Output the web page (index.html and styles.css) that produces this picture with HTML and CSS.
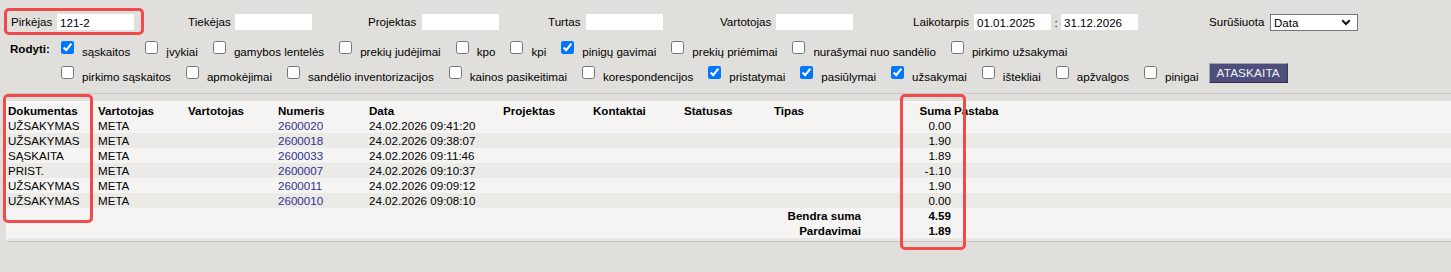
FILE: index.html
```html
<!DOCTYPE html>
<html lang="lt">
<head>
<meta charset="utf-8">
<title>Ataskaita</title>
<link rel="stylesheet" href="styles.css">
</head>
<body>
<div class="page">
  <form class="filters">
    <label class="lbl">Pirkėjas</label><span class="cell"><input class="txt" value="121-2"></span>
    <label class="lbl">Tiekėjas</label><span class="cell"><input class="txt"></span>
    <label class="lbl">Projektas</label><span class="cell"><input class="txt"></span>
    <label class="lbl">Turtas</label><span class="cell"><input class="txt"></span>
    <label class="lbl">Vartotojas</label><span class="cell"><input class="txt"></span>
    <label class="lbl">Laikotarpis</label><span class="cell period"><input class="txt" value="01.01.2025"><span class="colon">:</span><input class="txt" value="31.12.2026"></span>
    <label class="lbl">Surūšiuota</label><span class="cell"><span class="sel"><select><option>Data</option></select><svg class="chev" width="10" height="7" viewBox="0 0 10 7"><path d="M1.2 1.3 L5 5 L8.8 1.3" fill="none" stroke="#111" stroke-width="2"/></svg></span></span>
  </form>

  <div class="opts">
    <b class="rodyti">Rodyti:</b>
    <div class="optrow">
      <label class="opt"><input type="checkbox" checked><span>sąskaitos</span></label>
      <label class="opt"><input type="checkbox"><span>įvykiai</span></label>
      <label class="opt"><input type="checkbox"><span>gamybos lentelės</span></label>
      <label class="opt"><input type="checkbox"><span>prekių judėjimai</span></label>
      <label class="opt"><input type="checkbox"><span>kpo</span></label>
      <label class="opt"><input type="checkbox"><span>kpi</span></label>
      <label class="opt"><input type="checkbox" checked><span>pinigų gavimai</span></label>
      <label class="opt"><input type="checkbox"><span>prekių priėmimai</span></label>
      <label class="opt"><input type="checkbox"><span>nurašymai nuo sandėlio</span></label>
      <label class="opt"><input type="checkbox"><span>pirkimo užsakymai</span></label>
    </div>
    <div class="optrow row2">
      <label class="opt"><input type="checkbox"><span>pirkimo sąskaitos</span></label>
      <label class="opt"><input type="checkbox"><span>apmokėjimai</span></label>
      <label class="opt"><input type="checkbox"><span>sandėlio inventorizacijos</span></label>
      <label class="opt"><input type="checkbox"><span>kainos pasikeitimai</span></label>
      <label class="opt"><input type="checkbox"><span>korespondencijos</span></label>
      <label class="opt"><input type="checkbox" checked><span>pristatymai</span></label>
      <label class="opt"><input type="checkbox" checked><span>pasiūlymai</span></label>
      <label class="opt"><input type="checkbox" checked><span>užsakymai</span></label>
      <label class="opt"><input type="checkbox"><span>ištekliai</span></label>
      <label class="opt"><input type="checkbox"><span>apžvalgos</span></label>
      <label class="opt"><input type="checkbox"><span>pinigai</span></label>
      <button type="button" class="btn">ATASKAITA</button>
    </div>
  </div>

  <div class="report">
    <div class="band"></div>
    <table class="grid">
      <colgroup>
        <col class="c90"><col class="c90"><col class="c90"><col class="c91"><col class="c134">
        <col class="c90"><col class="c91"><col class="c90"><col class="c90"><col class="c90"><col>
      </colgroup>
      <thead>
        <tr><th>Dokumentas</th><th>Vartotojas</th><th>Vartotojas</th><th>Numeris</th><th>Data</th><th>Projektas</th><th>Kontaktai</th><th>Statusas</th><th>Tipas</th><th class="num">Suma</th><th>Pastaba</th></tr>
      </thead>
      <tbody>
        <tr><td>UŽSAKYMAS</td><td>META</td><td></td><td><a href="#">2600020</a></td><td>24.02.2026 09:41:20</td><td></td><td></td><td></td><td></td><td class="num">0.00</td><td></td></tr>
        <tr class="alt"><td>UŽSAKYMAS</td><td>META</td><td></td><td><a href="#">2600018</a></td><td>24.02.2026 09:38:07</td><td></td><td></td><td></td><td></td><td class="num">1.90</td><td></td></tr>
        <tr><td>SĄSKAITA</td><td>META</td><td></td><td><a href="#">2600033</a></td><td>24.02.2026 09:11:46</td><td></td><td></td><td></td><td></td><td class="num">1.89</td><td></td></tr>
        <tr class="alt"><td>PRIST.</td><td>META</td><td></td><td><a href="#">2600007</a></td><td>24.02.2026 09:10:37</td><td></td><td></td><td></td><td></td><td class="num">-1.10</td><td></td></tr>
        <tr><td>UŽSAKYMAS</td><td>META</td><td></td><td><a href="#">2600011</a></td><td>24.02.2026 09:09:12</td><td></td><td></td><td></td><td></td><td class="num">1.90</td><td></td></tr>
        <tr class="alt"><td>UŽSAKYMAS</td><td>META</td><td></td><td><a href="#">2600010</a></td><td>24.02.2026 09:08:10</td><td></td><td></td><td></td><td></td><td class="num">0.00</td><td></td></tr>
        <tr class="tot"><td colspan="9" class="num">Bendra suma</td><td class="num">4.59</td><td></td></tr>
        <tr class="tot"><td colspan="9" class="num">Pardavimai</td><td class="num">1.89</td><td></td></tr>
      </tbody>
    </table>
  </div>

  <div class="mark m1"></div>
  <div class="mark m2"></div>
  <div class="mark m3"></div>
</div>
</body>
</html>
```

FILE: styles.css
```css
html, body {
  margin: 0;
  padding: 0;
  background: #e0dfdb;
}
body {
  font-family: "Liberation Sans", Arial, sans-serif;
  font-size: 11.6px;
  color: #000;
  height: 272px;
  overflow: hidden;
}
.page {
  position: relative;
}

/* filter row */
.filters {
  display: grid;
  grid-template-columns: 46px 131px 47px 133px 54px 126px 38px 134px 56px 137px 61px 235px 61px auto;
  grid-template-rows: 16px;
  align-items: center;
  padding: 14px 0 0 11px;
  margin: 0;
}
.lbl {
  line-height: 16px;
  white-space: nowrap;
}
.cell {
  display: flex;
  align-items: center;
}
.txt {
  box-sizing: border-box;
  width: 77px;
  height: 16px;
  border: 0;
  padding: 0 3px;
  margin: 0;
  background: #fff;
  font: inherit;
  color: #000;
  outline: none;
}
.colon {
  width: 10px;
  text-align: center;
}
.sel {
  position: relative;
  display: inline-block;
}
.sel select {
  appearance: none;
  -webkit-appearance: none;
  box-sizing: border-box;
  width: 88px;
  height: 17px;
  margin: 0;
  padding: 0 0 0 3px;
  border: 1px solid #767676;
  border-radius: 0;
  background: #fff;
  font: inherit;
  color: #000;
  line-height: 15px;
}
.chev {
  position: absolute;
  right: 7px;
  top: 5px;
  pointer-events: none;
}

/* options */
.opts {
  display: grid;
  grid-template-columns: 51px auto;
  grid-auto-rows: 25px;
  padding-left: 10px;
  margin-top: 11px;
}
.rodyti {
  line-height: 14px;
  padding-top: 1px;
}
.optrow {
  display: flex;
  align-items: flex-start;
  gap: 15px;
  white-space: nowrap;
}
.row2 {
  grid-column: 2;
}
.opt {
  display: flex;
  align-items: flex-start;
  gap: 8px;
}
.opt input {
  width: 13px;
  height: 13px;
  margin: 0;
}
.opt span {
  line-height: 14px;
  padding-top: 4px;
}
.btn {
  box-sizing: border-box;
  height: 20px;
  margin: -3px 0 0 -5px;
  padding: 0 7px;
  background: #4e4e7c;
  color: #f2f2f8;
  border: 1px solid #a3a3b6;
  border-bottom-color: #2c2c48;
  border-right-color: #3a3a58;
  font: inherit;
  font-size: 11.8px;
  letter-spacing: 0.1px;
}

/* report */
.report {
  margin: 2px 0 0 6px;
  border-top: 1px solid #c9c8c4;
  border-bottom: 1px solid #c6c5c1;
  border-left: 1px solid #f7f7f5;
  background: #f5f4f2;
}
.band {
  height: 7px;
  background: #e0dfdb;
  border-bottom: 2px solid #f9f9f8;
}
.grid {
  width: 100%;
  border-collapse: collapse;
  table-layout: fixed;
  border-bottom: 3px solid #e8e7e3;
}
.c90 { width: 90px; }
.c91 { width: 91px; }
.c134 { width: 134px; }
.grid th,
.grid td {
  height: 15px;
  line-height: 15px;
  padding: 0 1px;
  text-align: left;
  white-space: nowrap;
  overflow: visible;
}
.grid th { font-weight: bold; }
.grid .num {
  text-align: right;
  padding-right: 2px;
}
.grid tr.alt td {
  background: #ebeae6;
}
.grid tr.tot td {
  font-weight: bold;
}
.grid a {
  color: #32328f;
  text-decoration: none;
}

/* annotation highlights */
.mark {
  position: absolute;
  box-sizing: border-box;
  border: 3px solid #f04a4a;
  border-radius: 5px;
  pointer-events: none;
}
.m1 { left: 4px; top: 8px; width: 140px; height: 27px; }
.m2 { left: 3px; top: 94px; width: 90px; height: 129px; }
.m3 { left: 900px; top: 94px; width: 66px; height: 156px; }
```
